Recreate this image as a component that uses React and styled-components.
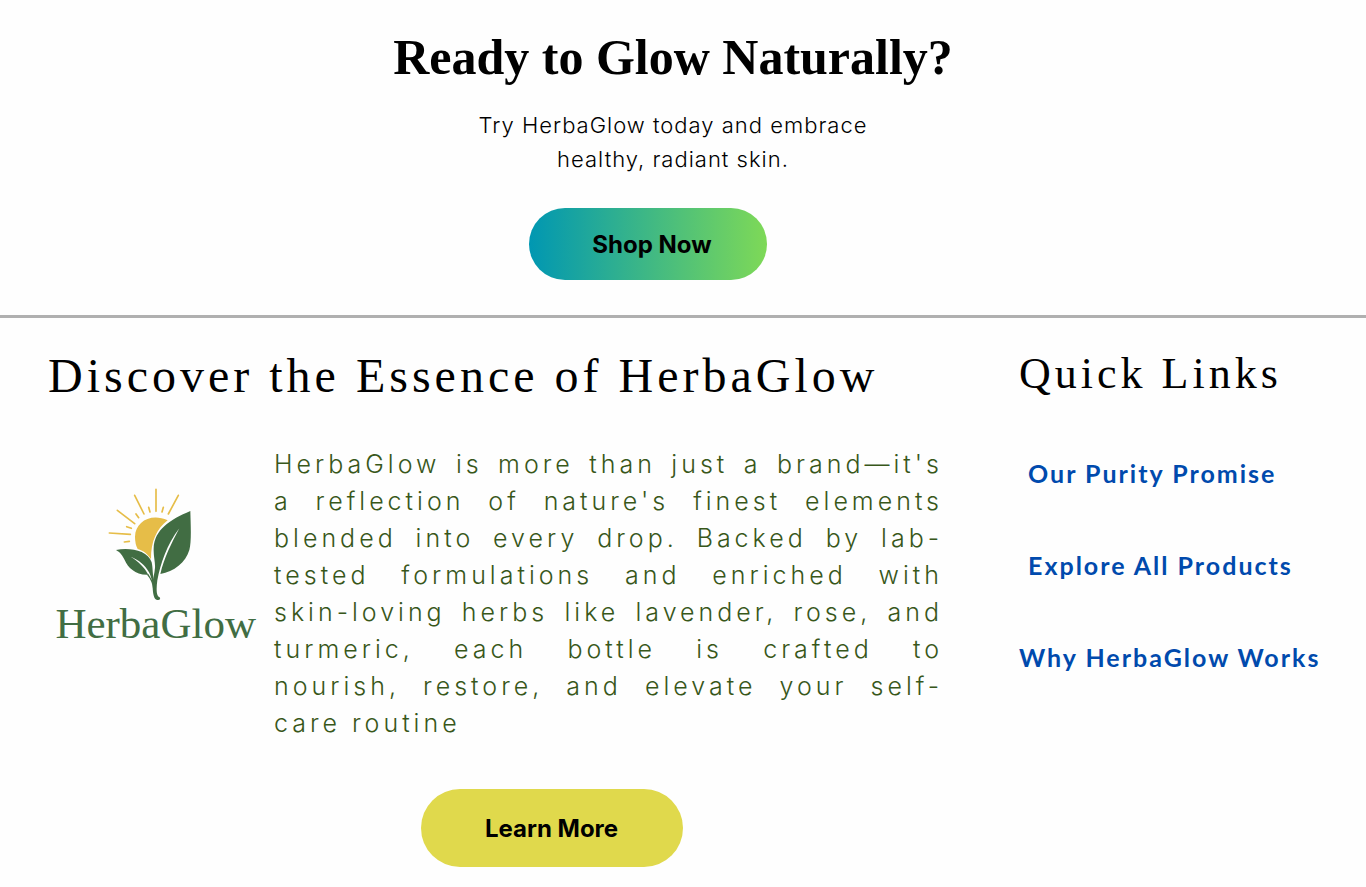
import React from "react";
import styled, { createGlobalStyle } from "styled-components";

const sans = `Inter, "Open Sans", sans-serif`;
const serif = `"Liberation Serif", serif`;

const GlobalStyle = createGlobalStyle`
  *, *::before, *::after { box-sizing: border-box; }
  body { margin: 0; background: #fefefe; color: #000; font-family: ${sans}; }
  h1, h2, p, ul { margin: 0; padding: 0; }
`;

const Hero = styled.section`
  display: flex;
  flex-direction: column;
  align-items: center;
  padding: 27px 20px 35px 0;
  border-bottom: 3px solid #b0b0b0;
`;

const HeroTitle = styled.h1`
  font: 700 50px/60px ${serif};
  text-align: center;
`;

const HeroText = styled.p`
  max-width: 440px;
  margin-top: 21px;
  font-size: 22px;
  font-weight: 300;
  line-height: 34px;
  letter-spacing: 1px;
  text-align: center;
`;

const PillButton = styled.button`
  border: 0;
  border-radius: 40px;
  color: #000;
  font: 700 24px/28px ${sans};
  cursor: pointer;
`;

const ShopButton = styled(PillButton)`
  width: 238px;
  height: 72px;
  margin: 32px 50px 0 0;
  padding: 2px 0 0 8px;
  background: linear-gradient(90deg, #0097b2, #7ed957);
`;

const LearnButton = styled(PillButton)`
  width: 262px;
  height: 78px;
  padding: 2px 0 0;
  background: #e0d94c;
`;

const Footer = styled.footer`
  display: grid;
  grid-template-columns: minmax(0, 1fr) 347px;
  gap: 76px;
  padding: 28px 0 20px;
`;

const About = styled.section`
  padding-left: 48px;
`;

const Heading = styled.h2`
  font: 400 ${(p) => (p.$small ? "44px/56px" : "48px/60px")} ${serif};
  letter-spacing: 4px;
  white-space: nowrap;
`;

const Story = styled.div`
  display: flex;
  gap: 18px;
  margin: 40px 0 47px;
`;

const Brand = styled.div`
  flex: none;
  display: flex;
  flex-direction: column;
  align-items: flex-end;
  width: 208px;
  padding-top: 34px;
`;

const Mark = styled.svg`
  width: 100px;
  height: 120px;
  margin-right: 56px;
`;

const BrandName = styled.span`
  color: #416d43;
  font: 400 43px/48px ${serif};
`;

const StoryText = styled.p`
  flex: 1;
  color: #38571a;
  font-size: 25px;
  font-weight: 300;
  line-height: 37px;
  letter-spacing: 4px;
`;

const Line = styled.span`
  display: block;
  text-align: justify;
  text-align-last: justify;

  &:last-child {
    text-align-last: start;
  }
`;

const Action = styled.div`
  display: flex;
  justify-content: center;
  padding-left: 112px;
`;

const LinkList = styled.ul`
  display: flex;
  flex-direction: column;
  gap: 60px;
  margin-top: 55px;
  list-style: none;
`;

const LinkItem = styled.li`
  padding-left: ${(p) => (p.$indent ? 9 : 0)}px;
`;

const QuickLink = styled.a`
  color: #004aad;
  font: 700 25px/32px Lato, sans-serif;
  letter-spacing: 2px;
  text-decoration: none;
  white-space: nowrap;
`;

const STORY = [
  "HerbaGlow is more than just a brand—it's ",
  "a reflection of nature's finest elements ",
  "blended into every drop. Backed by lab-",
  "tested formulations and enriched with ",
  "skin-loving herbs like lavender, rose, and ",
  "turmeric, each bottle is crafted to ",
  "nourish, restore, and elevate your self-",
  "care routine",
];

const LINKS = [
  { label: "Our Purity Promise", indent: true },
  { label: "Explore All Products", indent: true },
  { label: "Why HerbaGlow Works", indent: false },
];

function LeafMark() {
  return (
    <Mark viewBox="0 0 300 360" aria-hidden="true">
      <g stroke="#e6bd48" strokeWidth="5" strokeLinecap="round">
        <path d="M28 159 91 163M52 91 104 131M104 46 132 102M168 28V94M235 46 205 102" />
        <path d="M73 186 88 184M80 140 94 145M108 102 116 113M146 82 150 96M190 82 186 96" />
      </g>
      <path
        fill="#e6bd48"
        d="M203 121C152 98 106 126 105 170Q105 192 113 207C132 212 144 224 153 238C153 184 169 148 203 121Z"
      />
      <g fill="#416d43">
        <path d="M271 93C210 119 163 149 161 205C160 229 166 244 165 263C164 281 156 302 158 324C159 342 162 362 175 360C181 359 182 354 178 351C168 348 169 323 172 301C182 250 200 195 238 145C214 190 192 235 181 282C222 275 257 248 268 210C275 184 272 132 271 93Z" />
        <path d="M48 210C89 202 143 211 155 247C159 264 157 286 163 305V326C157 308 153 288 147 277C136 255 115 239 92 230C115 244 133 261 145 284C107 286 84 263 74 240C67 225 60 217 48 210Z" />
        <path d="M145 282 163 312 160 329C158 314 153 297 141 284Z" />
      </g>
    </Mark>
  );
}

export default function App() {
  return (
    <>
      <GlobalStyle />
      <Hero>
        <HeroTitle>Ready to Glow Naturally?</HeroTitle>
        <HeroText>Try HerbaGlow today and embrace healthy, radiant skin.</HeroText>
        <ShopButton type="button">Shop Now</ShopButton>
      </Hero>
      <Footer>
        <About>
          <Heading>Discover the Essence of HerbaGlow</Heading>
          <Story>
            <Brand>
              <LeafMark />
              <BrandName>HerbaGlow</BrandName>
            </Brand>
            <StoryText>
              {STORY.map((line) => (
                <Line key={line}>{line}</Line>
              ))}
            </StoryText>
          </Story>
          <Action>
            <LearnButton type="button">Learn More</LearnButton>
          </Action>
        </About>
        <nav aria-labelledby="quick-links">
          <Heading id="quick-links" $small>
            Quick Links
          </Heading>
          <LinkList>
            {LINKS.map((link) => (
              <LinkItem key={link.label} $indent={link.indent}>
                <QuickLink href="#">{link.label}</QuickLink>
              </LinkItem>
            ))}
          </LinkList>
        </nav>
      </Footer>
    </>
  );
}
